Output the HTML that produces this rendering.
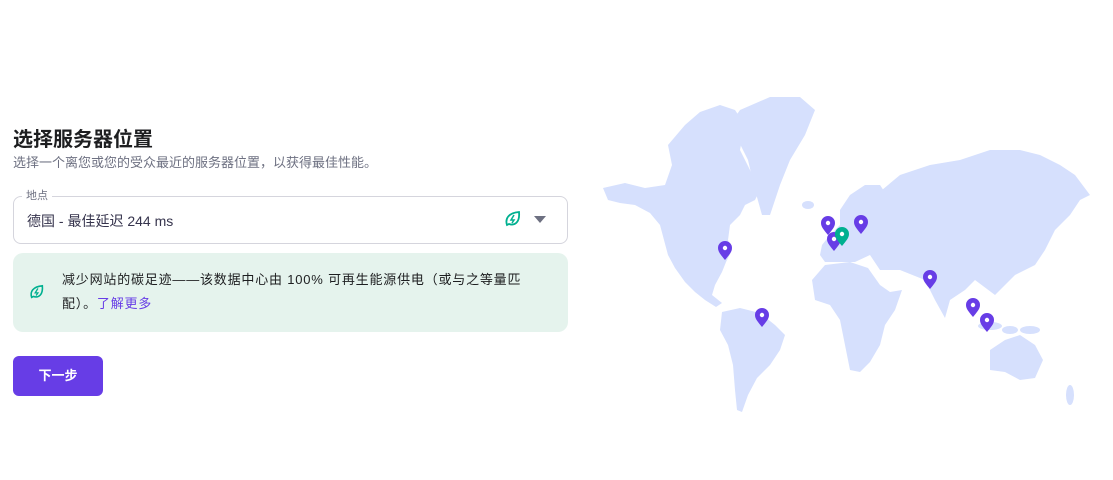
<!DOCTYPE html>
<html><head><meta charset="utf-8"><style>
body{margin:0;width:1113px;height:480px;background:#fff;font-family:"Liberation Sans","Noto Sans CJK SC",sans-serif;position:relative;overflow:hidden;color:#1d1e20}
.a{position:absolute}
</style></head><body>
<div class="a" style="left:13px;top:123px;font-size:20px;font-weight:bold;">选择服务器位置</div>
<div class="a" style="left:13px;top:152px;font-size:13px;color:#6d7081;">选择一个离您或您的受众最近的服务器位置，以获得最佳性能。</div>
<div class="a" style="left:13px;top:196px;width:553px;height:46px;border:1px solid #d5d5dd;border-radius:8px;"></div>
<div class="a" style="left:22px;top:187px;font-size:11px;color:#6d7081;background:#fff;padding:0 4px;">地点</div>
<div class="a" style="left:27px;top:211px;font-size:14px;color:#36344d;">德国 - 最佳延迟 244 ms</div>
<svg class="a" style="left:504px;top:210px" width="18" height="18" viewBox="0 0 18 18"><path d="M3 15 C1 9 4 3 15 2 C16 12 11 16 5 14 Z" fill="none" stroke="#00b090" stroke-width="1.8"/><path d="M10 5 L7 10 H10 L8 13" fill="none" stroke="#00b090" stroke-width="1.5"/></svg>
<div class="a" style="left:534px;top:216px;width:0;height:0;border-left:6px solid transparent;border-right:6px solid transparent;border-top:7px solid #6d7081;"></div>
<div class="a" style="left:13px;top:253px;width:555px;height:79px;background:#e5f3ed;border-radius:10px;"></div>
<svg class="a" style="left:29px;top:284px" width="16" height="16" viewBox="0 0 18 18"><path d="M3 15 C1 9 4 3 15 2 C16 12 11 16 5 14 Z" fill="none" stroke="#00b090" stroke-width="1.8"/><path d="M10 5 L7 10 H10 L8 13" fill="none" stroke="#00b090" stroke-width="1.5"/></svg>
<div class="a" style="left:62px;top:268px;width:490px;font-size:13px;line-height:24px;color:#1d1e20;letter-spacing:0.8px;">减少网站的碳足迹——该数据中心由 100% 可再生能源供电（或与之等量匹<br>配）。<span style="color:#673de6">了解更多</span></div>
<div class="a" style="left:13px;top:356px;width:90px;height:40px;background:#673de6;border-radius:6px;color:#fff;font-weight:bold;font-size:13px;line-height:40px;text-align:center;">下一步</div>
<svg class="a" style="left:0;top:0" width="1113" height="480">
<g fill="#d6e0fd">
<polygon points="603,188 625,183 645,188 665,185 672,165 668,145 685,125 700,112 720,105 735,110 745,125 740,150 750,170 760,190 755,200 745,205 740,215 730,225 728,240 732,250 726,262 722,272 715,285 712,295 722,303 716,307 705,300 695,292 685,282 675,268 668,255 664,240 660,225 650,213 635,205 620,203 608,200"/>
<polygon points="740,110 770,97 800,97 815,110 805,135 790,160 780,185 770,215 762,215 755,190 748,160 738,140 733,120"/>
<polygon points="722,312 740,308 760,313 775,325 785,335 780,350 770,365 757,378 748,395 742,412 737,410 735,390 733,365 728,345 720,330"/>
<polygon points="822,245 830,235 840,225 840,210 850,195 865,185 880,185 890,200 885,220 880,240 870,255 855,262 840,262 825,262 820,255"/>
<polygon points="812,280 825,265 850,262 868,268 880,285 890,292 902,290 895,310 885,325 880,345 870,362 860,372 850,370 845,345 840,320 830,305 815,300"/>
<polygon points="855,230 870,200 900,175 930,165 960,160 990,150 1020,150 1040,155 1060,165 1075,175 1090,195 1080,200 1070,215 1055,230 1045,250 1035,265 1015,275 1005,285 995,295 975,280 965,290 950,300 945,318 935,300 925,280 900,270 880,270 870,255 860,250"/>
<polygon points="990,350 1005,340 1020,335 1035,345 1043,360 1035,378 1020,380 1005,372 990,370"/>
<ellipse cx="990" cy="326" rx="12" ry="4"/><ellipse cx="1010" cy="330" rx="8" ry="4"/><ellipse cx="1030" cy="330" rx="10" ry="4"/>
<ellipse cx="808" cy="205" rx="6" ry="4"/><ellipse cx="1070" cy="395" rx="4" ry="10"/>
</g>
<defs><g id="p"><path d="M0 0 C-4 -5 -7 -8 -7 -12 A7 7 0 0 1 7 -12 C7 -8 4 -5 0 0Z"/><circle cx="0" cy="-12" r="2.2" fill="#fff"/></g></defs>
<g fill="#673de6">
<use href="#p" x="725" y="260"/><use href="#p" x="762" y="327"/><use href="#p" x="828" y="235"/><use href="#p" x="834" y="251"/><use href="#p" x="861" y="234"/><use href="#p" x="930" y="289"/><use href="#p" x="973" y="317"/><use href="#p" x="987" y="332"/>
</g>
<use href="#p" x="842" y="246" fill="#00b090"/>
</svg>
</body></html>
